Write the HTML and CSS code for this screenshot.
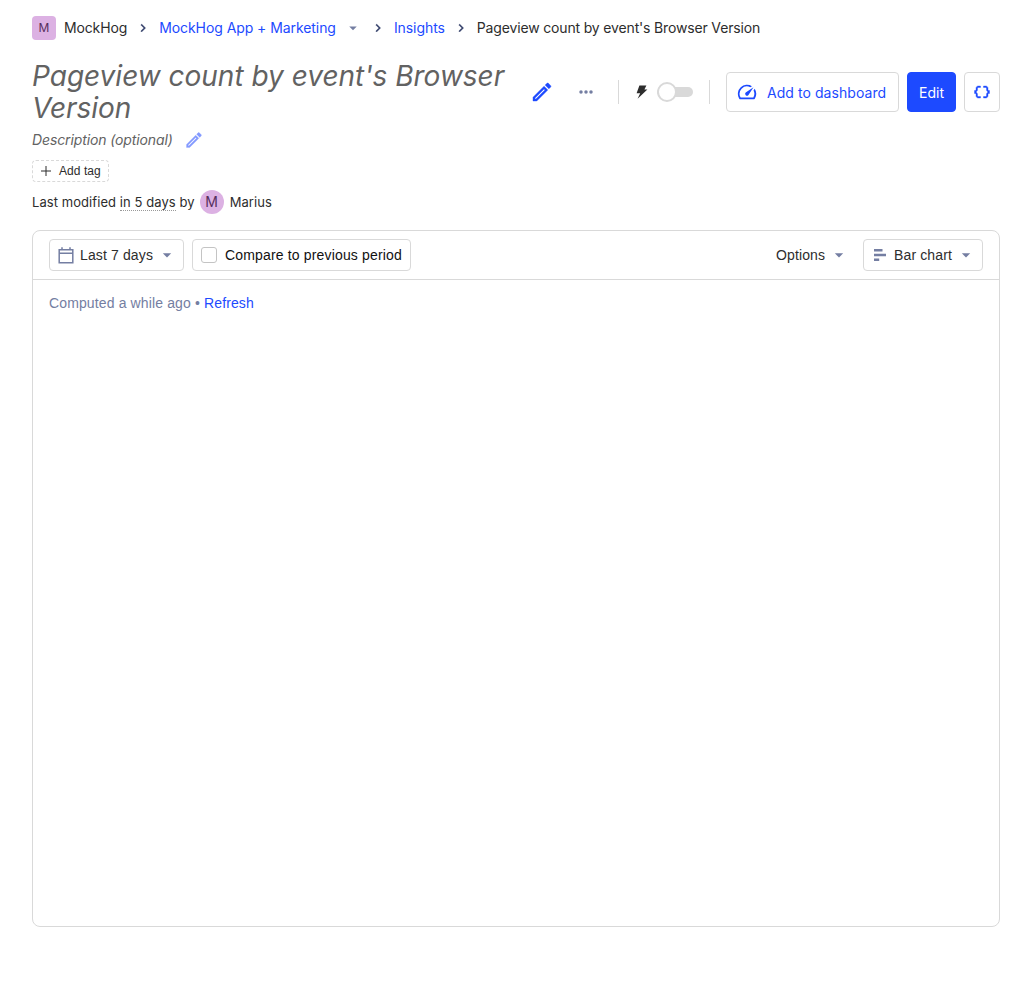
FILE: index.html
```html
<!DOCTYPE html>
<html lang="en">
<head>
<meta charset="utf-8">
<title>Insight</title>
<link rel="stylesheet" href="styles.css">
</head>
<body>
<svg class="sprite" aria-hidden="true">
  <symbol id="chevron" viewBox="0 0 24 24"><path d="M8.6 16.6 13.2 12 8.6 7.4 10 6l6 6-6 6z"/></symbol>
  <symbol id="caret" viewBox="0 0 24 24"><path d="M7 10l5 5 5-5z"/></symbol>
  <symbol id="pencil" viewBox="0 0 24 24"><path d="M14.06 9.02l.92.92L5.92 19H5v-.92l9.06-9.06M17.66 3c-.25 0-.51.1-.7.29l-1.83 1.83 3.75 3.75 1.83-1.83c.39-.39.39-1.02 0-1.41l-2.34-2.34c-.2-.2-.45-.29-.71-.29zm-3.6 3.19L3 17.25V21h3.75L17.81 9.94l-3.75-3.75z"/></symbol>
</svg>
<main class="page">
  <nav class="crumbs">
    <span class="lettermark">M</span>
    <span class="crumb org">MockHog</span>
    <svg class="sep"><use href="#chevron"/></svg>
    <a class="crumb project">MockHog App + Marketing</a>
    <svg class="switch-caret"><use href="#caret"/></svg>
    <svg class="sep"><use href="#chevron"/></svg>
    <a class="crumb insights">Insights</a>
    <svg class="sep"><use href="#chevron"/></svg>
    <span class="crumb here">Pageview count by event's Browser Version</span>
  </nav>

  <header class="title-bar">
    <h1>Pageview count by event's Browser Version</h1>
    <svg class="title-edit"><use href="#pencil"/></svg>
    <div class="actions">
      <svg class="more" viewBox="0 0 16 16"><circle cx="3" cy="8" r="1.750"/><circle cx="8" cy="8" r="1.750"/><circle cx="13" cy="8" r="1.750"/></svg>
      <i class="divider"></i>
      <svg class="bolt" viewBox="0 0 12 14"><path d="M3.400.5h7L8.400 4.600h3L1.600 13.700 4.200 8.200H.6z"/></svg>
      <span class="toggle"><span class="knob"></span></span>
      <i class="divider"></i>
      <button class="btn add"><svg viewBox="0 0 24 24"><path d="M20.38 8.57l-1.23 1.85a8 8 0 0 1-.22 7.58H5.07A8 8 0 0 1 15.58 6.85l1.85-1.23A10 10 0 0 0 3.35 19a2 2 0 0 0 1.72 1h13.85a2 2 0 0 0 1.74-1 10 10 0 0 0-.27-10.44z"/><path d="M10.59 15.41a2 2 0 0 0 2.83 0l5.66-8.49-8.49 5.66a2 2 0 0 0 0 2.83z"/></svg><span>Add to dashboard</span></button>
      <button class="btn edit">Edit</button>
      <button class="btn json"><svg viewBox="0 0 24 24"><path d="M4 7v2c0 .55-.45 1-1 1H2v4h1c.55 0 1 .45 1 1v2c0 1.650 1.350 3 3 3h3v-2H7c-.55 0-1-.45-1-1v-2c0-1.300-.84-2.420-2-2.830v-.34C5.160 11.420 6 10.300 6 9V7c0-.55.45-1 1-1h3V4H7C5.350 4 4 5.350 4 7zM21 10c-.55 0-1-.45-1-1V7c0-1.650-1.350-3-3-3h-3v2h3c.55 0 1 .45 1 1v2c0 1.300.84 2.420 2 2.830v.34c-1.160.41-2 1.520-2 2.830v2c0 .55-.45 1-1 1h-3v2h3c1.650 0 3-1.350 3-3v-2c0-.55.45-1 1-1h1v-4h-1z"/></svg></button>
    </div>
  </header>

  <div class="description"><em>Description (optional)</em><svg><use href="#pencil"/></svg></div>
  <button class="tag"><svg viewBox="0 0 10 10"><path d="M5 0v10M0 5h10"/></svg><span>Add tag</span></button>
  <div class="modified"><span>Last modified <span class="when">in 5 days</span> by</span><span class="avatar">M</span><span>Marius</span></div>

  <section class="card">
    <div class="toolbar">
      <button class="control date"><svg class="calendar" viewBox="0 0 16 17"><path d="M1.200 2.700h13.600v13H1.200zM1.200 6.200h13.600M4 .2v2.500M12 .2v2.500"/></svg><span>Last 7 days</span><svg class="caret"><use href="#caret"/></svg></button>
      <label class="control compare"><i class="checkbox"></i><span>Compare to previous period</span></label>
      <button class="control options"><span>Options</span><svg class="caret"><use href="#caret"/></svg></button>
      <button class="control chart"><svg class="bars" viewBox="0 0 12 12"><path d="M0 1.200h8.500M0 6h12M0 10.800h5.200"/></svg><span>Bar chart</span><svg class="caret"><use href="#caret"/></svg></button>
    </div>
    <p class="computed">Computed a while ago • <a>Refresh</a></p>
  </section>
</main>
</body>
</html>
```
FILE: styles.css
```css
* { box-sizing: border-box; }
body { margin: 0; background: #fff; color: #2d2d2d; font: 14px/20px Inter, sans-serif; }
svg { display: block; flex: none; fill: currentColor; }
button { margin: 0; font: inherit; letter-spacing: inherit; color: inherit; background: #fff; }
a { color: #1d4aff; }
.sprite { position: absolute; width: 0; height: 0; }
.page { padding: 16px 32px 0; }

.crumbs { display: flex; align-items: center; height: 24px; white-space: nowrap; }
.lettermark { width: 24px; height: 24px; margin-right: 8px; border-radius: 4px; background: #dcb1e3; color: #572e5e; font-size: 12px; line-height: 24px; text-align: center; }
.sep { width: 16px; height: 16px; margin: 0 8px; color: #35416b; stroke: currentColor; stroke-width: 0.4; }
.switch-caret { width: 18px; height: 18px; margin-left: 8px; color: #747ea2; }
.org { letter-spacing: -0.14px; }
.project, .insights { letter-spacing: -0.07px; }
.here { letter-spacing: -0.16px; }

.title-bar { display: flex; align-items: center; height: 64px; margin-top: 20px; }
h1 { width: 490px; margin: 0; font-size: 28px; font-style: italic; font-weight: 400; line-height: 32px; letter-spacing: -0.01px; color: #626262; }
.title-edit { width: 24px; height: 24px; margin-left: 8px; color: #1d4aff; stroke: currentColor; stroke-width: 0.4; }
.actions { display: flex; align-items: center; margin-left: auto; }
.more { width: 16px; height: 16px; margin-right: 24px; color: #747ea2; }
.divider { width: 1px; height: 24px; background: #d9d9d9; }
.bolt { width: 12px; height: 14px; margin: 0 9px 0 17px; }
.toggle { display: flex; align-items: center; width: 36px; height: 10px; margin-right: 16px; background: #d9d9d9; border-radius: 5px; }
.knob { width: 20px; height: 20px; border: 2px solid #d9d9d9; border-radius: 50%; background: #fff; }
.btn { display: flex; align-items: center; justify-content: center; height: 40px; padding: 0; border: 1px solid #d9d9d9; border-radius: 4px; color: #1d4aff; white-space: nowrap; }
.btn span, .edit { padding-top: 2px; }
.add { justify-content: flex-start; width: 173px; margin-left: 16px; padding-left: 9px; letter-spacing: 0.06px; }
.add svg { width: 22px; height: 22px; margin-right: 9px; }
.edit { width: 49px; margin: 0 8px; border-color: #1d4aff; background: #1d4aff; color: #fff; }
.json { width: 36px; }
.json svg { width: 18px; height: 18px; stroke: currentColor; stroke-width: 0.5; }

.description { display: flex; align-items: center; height: 24px; margin-top: 4px; color: #626262; letter-spacing: -0.12px; }
.description svg { width: 20px; height: 20px; margin-left: 11px; color: #8399ff; stroke: currentColor; stroke-width: 0.3; }
.tag { display: flex; align-items: center; width: 77px; height: 22px; margin-top: 8px; padding: 0 0 0 8px; border: 1px dashed #d9d9d9; border-radius: 4px; font: 12px/20px "Liberation Sans", sans-serif; letter-spacing: 0.05px; white-space: nowrap; }
.tag svg { width: 10px; height: 10px; margin-right: 8px; stroke: currentColor; }
.modified { display: flex; align-items: center; height: 24px; margin-top: 8px; font-size: 13px; letter-spacing: 0.07px; }
.when { border-bottom: 1px dotted #999; }
.avatar { width: 24px; height: 24px; margin: 0 6px 0 5px; border-radius: 50%; background: #dcb1e3; color: #572e5e; font-size: 14px; line-height: 24px; text-align: center; }

.card { height: 697px; margin-top: 16px; border: 1px solid #d9d9d9; border-radius: 8px; font-family: "Liberation Sans", sans-serif; letter-spacing: 0.13px; }
.toolbar { display: flex; align-items: center; height: 49px; padding: 0 16px; border-bottom: 1px solid #d9d9d9; white-space: nowrap; }
.control { display: flex; align-items: center; height: 32px; padding: 0 8px; border: 1px solid #d9d9d9; border-radius: 4px; }
.caret { width: 20px; height: 20px; margin: 0 -2px 0 auto; color: #747ea2; }
.date { width: 135px; }
.calendar { width: 16px; height: 17px; margin-right: 6px; fill: none; stroke: #747ea2; stroke-width: 1.5; }
.compare { width: 219px; margin-left: 8px; color: #111; letter-spacing: 0.16px; }
.checkbox { width: 16px; height: 16px; margin-right: 8px; border: 1px solid #c4c4c4; border-radius: 3px; }
.options { width: 88px; margin-left: auto; border-color: transparent; }
.options .caret { margin-right: -3px; }
.chart { width: 120px; margin-left: 8px; padding-left: 10px; }
.bars { width: 12px; height: 12px; margin-right: 8px; stroke: #747ea2; stroke-width: 2.4; }
.computed { margin: 13px 16px; color: #747ea2; }
```
